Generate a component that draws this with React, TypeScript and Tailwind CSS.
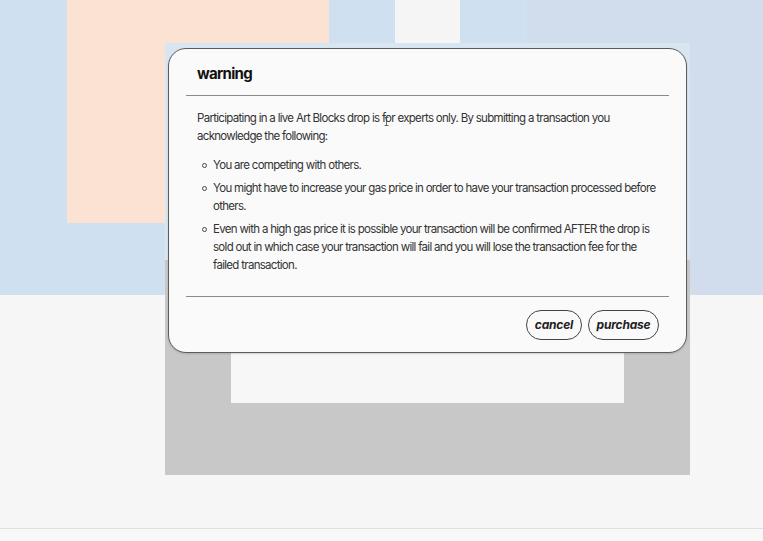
import React from "react";

const items = [
  "You are competing with others.",
  "You might have to increase your gas price in order to have your transaction processed before others.",
  "Even with a high gas price it is possible your transaction will be confirmed AFTER the drop is sold out in which case your transaction will fail and you will lose the transaction fee for the failed transaction.",
];

function WarningModal() {
  return (
    <div className="absolute left-[168px] top-[48px] w-[519px] h-[305px] rounded-[18px] border border-[#5c5c5c] bg-[#fafafa] flex flex-col shadow-[0_1px_2px_rgba(0,0,0,0.15)]">
      <div className="px-[28px] pt-[15px] pb-[11px]">
        <h2 className="text-[15px] leading-[20px] font-bold tracking-[-0.7px] text-[#111]">warning</h2>
      </div>
      <div className="mx-[17px] h-px bg-[#8a8a8a]" />
      <div className="relative pl-[28px] pr-[24px] pt-[13px] text-[11.5px] leading-[18px] tracking-[-0.7px] text-[#333]">
        <p>
          Participating in a live Art Blocks drop is for experts only. By submitting a transaction you
          acknowledge the following:
        </p>
        <ul className="mt-[11px] flex flex-col gap-[5px]">
          {items.map((it) => (
            <li key={it} className="flex">
              <span className="mt-[7px] ml-[5px] mr-[6px] h-[5px] w-[5px] flex-none rounded-full border border-[#444]" />
              <span>{it}</span>
            </li>
          ))}
        </ul>
        {/* text cursor */}
        <svg className="absolute left-[215px] top-[21px]" width="5" height="9" viewBox="0 0 5 9">
          <path d="M0.5 0.5h4M2.5 0.5v8M0.5 8.5h4" stroke="#444" strokeWidth="0.8" fill="none" />
        </svg>
      </div>
      <div className="flex-1" />
      <div className="mx-[17px] h-px bg-[#8a8a8a]" />
      <div className="flex justify-end gap-[6px] px-[27px] pt-[13px] pb-[12px]">
        <button className="h-[30px] w-[56px] rounded-full border border-[#444] text-[12px] font-bold italic tracking-[-0.2px] text-[#222]">
          cancel
        </button>
        <button className="h-[30px] w-[71px] rounded-full border border-[#444] text-[12px] font-bold italic tracking-[-0.2px] text-[#222]">
          purchase
        </button>
      </div>
    </div>
  );
}

export default function App() {
  return (
    <div
      className="relative w-[763px] h-[541px] overflow-hidden bg-[#f6f6f6] flex flex-col"
      style={{ fontFamily: "Inter, 'Noto Sans', sans-serif" }}
    >
      <div className="h-[295px] flex items-start bg-[#cfe1f0]">
        <div className="w-[67px]" />
        <div className="w-[262px] h-[223px] bg-[#fce2d3]" />
        <div className="w-[66px]" />
        <div className="w-[65px] h-[43px] bg-[#f5f5f5]" />
        <div className="w-[67px]" />
        <div className="flex-1 h-full bg-[#d1dced]" />
      </div>
      <div className="flex-1" />
      <div className="h-[13px] border-t border-[#e0e0e0] bg-[#f8f8f8]" />

      {/* backdrop card behind the dialog */}
      <div className="absolute left-[165px] top-[43px] w-[525px] h-[432px] flex flex-col">
        <div className="h-[217px] bg-[#d8e6f2]" />
        <div className="flex-1 bg-[#c8c8c8] px-[66px] pt-[70px]">
          <div className="h-[73px] bg-[#f7f7f7]" />
        </div>
      </div>

      <WarningModal />
    </div>
  );
}
